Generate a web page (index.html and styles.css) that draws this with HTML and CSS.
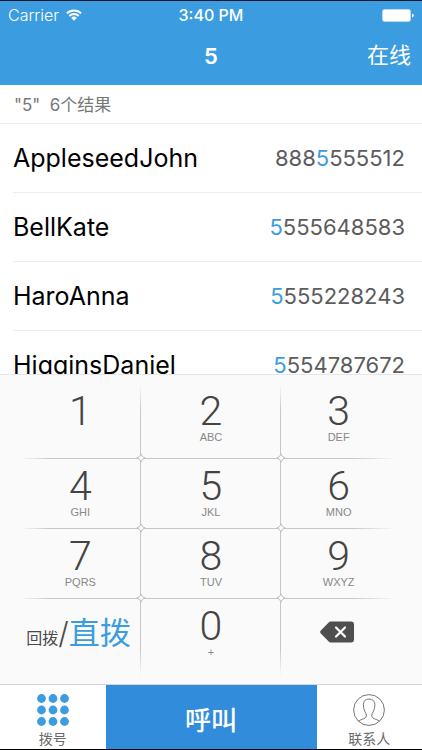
FILE: index.html
```html
<!DOCTYPE html>
<html lang="zh-CN">
<head>
    <meta charset="UTF-8">
    <meta name="viewport" content="width=device-width, initial-scale=1.0">
    <title>拨号</title>
    <link rel="stylesheet" href="styles.css">
</head>
<body>

    <!-- small star drawn where the keypad lines cross -->
    <svg class="defs" width="0" height="0">
        <symbol id="star" viewBox="0 0 10 10">
            <path d="M5 .8Q5.800 4.200 9.200 5Q5.800 5.800 5 9.200Q4.200 5.800 .8 5Q4.200 4.200 5 .8Z" fill="#fafafa" stroke="#bdbdbd" stroke-width="1"/>
        </symbol>
    </svg>

    <header class="top">
        <div class="status">
            <div class="carrier">
                <span>Carrier</span>
                <svg class="wifi" viewBox="0 0 16 12" width="16" height="12">
                    <path d="M.9 4.400a10 10 0 0 1 14.200 0M3.300 7a6.600 6.600 0 0 1 9.400 0" fill="none" stroke="#fff" stroke-width="1.9"/>
                    <path d="M8 11.800 5.200 8.900a4 4 0 0 1 5.600 0Z" fill="#fff"/>
                </svg>
            </div>
            <div class="clock">3:40 PM</div>
            <div class="battery">
                <svg viewBox="0 0 32 13" width="32" height="13">
                    <rect x=".5" y=".5" width="28" height="12" rx="2" fill="#fff" stroke="#b7dbf4"/>
                    <path d="M30 4.500q1.800.4 1.800 2t-1.800 2Z" fill="#fff"/>
                </svg>
            </div>
        </div>
        <div class="nav">
            <h1 class="title">5</h1>
            <button type="button" class="online">在线</button>
        </div>
    </header>

    <main class="results">
        <p class="summary">"5"&nbsp; 6个结果</p>
        <ul class="contacts">
            <li class="contact"><span class="who">AppleseedJohn</span><span class="number">888<b>5</b>555512</span></li>
            <li class="contact"><span class="who">BellKate</span><span class="number"><b>5</b>555648583</span></li>
            <li class="contact"><span class="who">HaroAnna</span><span class="number"><b>5</b>555228243</span></li>
            <li class="contact"><span class="who">HigginsDaniel</span><span class="number"><b>5</b>554787672</span></li>
        </ul>
    </main>

    <section class="keypad">
        <button type="button" class="key left">1<svg class="star"><use href="#star"/></svg></button>
        <button type="button" class="key">2<small>ABC</small><svg class="star"><use href="#star"/></svg></button>
        <button type="button" class="key right">3<small>DEF</small></button>
        <button type="button" class="key left">4<small>GHI</small><svg class="star"><use href="#star"/></svg></button>
        <button type="button" class="key">5<small>JKL</small><svg class="star"><use href="#star"/></svg></button>
        <button type="button" class="key right">6<small>MNO</small></button>
        <button type="button" class="key left">7<small>PQRS</small><svg class="star"><use href="#star"/></svg></button>
        <button type="button" class="key">8<small>TUV</small><svg class="star"><use href="#star"/></svg></button>
        <button type="button" class="key right">9<small>WXYZ</small></button>
        <button type="button" class="mode"><span class="back">回拨</span><span class="slash">/</span><span class="direct">直拨</span></button>
        <button type="button" class="key">0<small>+</small></button>
        <button type="button" class="delete" aria-label="删除">
            <svg viewBox="0 0 34 22" width="34" height="22">
                <path d="M10.500.5H31a3 3 0 0 1 3 3v15a3 3 0 0 1-3 3H10.500q-1 0-1.800-.9L.6 12.200q-.9-1.200 0-2.400L8.700 1.400Q9.500.5 10.500.5Z" fill="#4f4f4f"/>
                <path d="m16 6.500 9 9m0-9-9 9" stroke="#fff" stroke-width="2.2" stroke-linecap="round"/>
            </svg>
        </button>
    </section>

    <footer class="tabs">
        <button type="button" class="tab">
            <svg viewBox="0 0 32 32" width="32" height="32" fill="#3b9de0">
                <circle cx="4.5" cy="4.5" r="4.4"/><circle cx="16" cy="4.5" r="4.4"/><circle cx="27.5" cy="4.5" r="4.4"/>
                <circle cx="4.5" cy="16" r="4.4"/><circle cx="16" cy="16" r="4.4"/><circle cx="27.5" cy="16" r="4.4"/>
                <circle cx="4.5" cy="27.5" r="4.4"/><circle cx="16" cy="27.5" r="4.4"/><circle cx="27.5" cy="27.5" r="4.4"/>
            </svg>
            <span>拨号</span>
        </button>
        <button type="button" class="call">呼叫</button>
        <button type="button" class="tab">
            <svg viewBox="0 0 32 32" width="32" height="32" fill="none" stroke="#777" stroke-width="1">
                <circle cx="16" cy="16" r="15.4"/>
                <path d="M5.500 27.200c1.300-1.300 5.400-2.300 6.600-3.200 1.200-.9 1.700-2.600.9-4.200-1.300-2.400-2.600-5.400-2.600-9 0-3.700 1.900-5.800 5.600-5.800s5.900 2.100 5.900 5.800c0 3.600-1.500 6.600-2.800 9-.8 1.600-.3 3.300.9 4.200 1.200.9 5.200 1.900 6.500 3.200"/>
            </svg>
            <span>联系人</span>
        </button>
    </footer>

</body>
</html>
```
FILE: styles.css
```css
* {
    box-sizing: border-box;
}
body {
    font-family: Inter, "Noto Sans CJK SC", sans-serif;
    background-color: #fff;
    margin: 0;
    height: 100vh;
    display: flex;
    flex-direction: column;
    border-top: 1px solid #10142c;
    border-bottom: 1px solid #000;
}
button {
    font-family: inherit;
    background: none;
    border: none;
    padding: 0;
    margin: 0;
    cursor: pointer;
}
.defs {
    position: absolute;
}

/* header */
.top {
    background-color: #3b9de0;
    color: #fff;
    flex: none;
}
.status {
    display: grid;
    grid-template-columns: 1fr auto 1fr;
    align-items: center;
    height: 28px;
    padding: 0 8px;
    font-size: 16px;
}
.carrier {
    display: flex;
    align-items: center;
    gap: 7px;
    font-weight: 300;
}
.clock {
    font-weight: 500;
}
.battery {
    display: flex;
    justify-content: flex-end;
}
.nav {
    display: grid;
    grid-template-columns: 1fr auto 1fr;
    align-items: center;
    height: 56px;
    padding: 0 11px 2px;
}
.title {
    grid-column: 2;
    margin: 0;
    font-size: 22px;
    font-weight: 600;
}
.online {
    justify-self: end;
    color: #fff;
    font-size: 22px;
    line-height: 28px;
    padding-bottom: 2px;
}

/* search results */
.results {
    flex: 1;
    min-height: 0;
    overflow: hidden;
}
.summary {
    margin: 0;
    height: 39px;
    padding-left: 14px;
    border-bottom: 1px solid #ededed;
    color: #777;
    font-size: 17px;
    line-height: 40px;
}
.contacts {
    list-style: none;
    margin: 0;
    padding: 0 0 0 13px;
}
.contact {
    display: flex;
    justify-content: space-between;
    align-items: center;
    height: 69px;
    padding-right: 17px;
    border-bottom: 1px solid #ededed;
}
.who {
    color: #000;
    font-size: 25px;
}
.number {
    color: #5c5c5c;
    font-size: 22px;
}
.number b {
    color: #3b9de0;
    font-weight: inherit;
}

/* keypad */
.keypad {
    --line: #c6c6c6;
    --fade-x: linear-gradient(to right, transparent 20px, var(--line) 50px, var(--line) calc(100% - 70px), transparent calc(100% - 26px));
    --fade-y: linear-gradient(to bottom, transparent 10px, var(--line) 36px, var(--line) calc(100% - 36px), transparent calc(100% - 8px));
    flex: none;
    display: grid;
    grid-template-columns: repeat(3, 1fr);
    grid-template-rows: 75px 70px 70px 77px;
    padding: 9px 0 8px;
    border-top: 1px solid #e6e6e6;
    background-color: #fafafa;
    background-image: var(--fade-x), var(--fade-x), var(--fade-x), var(--fade-y), var(--fade-y);
    background-size: 100% 1px, 100% 1px, 100% 1px, 1px 100%, 1px 100%;
    background-position: 0 83px, 0 153px, 0 223px, 33.3% 0, 66.6% 0;
    background-repeat: no-repeat;
}
.key {
    position: relative;
    display: flex;
    flex-direction: column;
    align-items: center;
    padding-top: 7px;
    color: #444;
    font-family: Roboto, sans-serif;
    font-size: 41px;
    font-weight: 300;
    line-height: 40px;
}
.key small {
    color: #888;
    font-family: "Liberation Sans", sans-serif;
    font-size: 11px;
    font-weight: 400;
    line-height: 12px;
}
.left {
    padding-left: 20px;
}
.right {
    padding-right: 26px;
}
.star {
    position: absolute;
    right: -5px;
    bottom: -4px;
    width: 10px;
    height: 10px;
}
.mode {
    display: flex;
    align-items: baseline;
    justify-content: flex-end;
    padding: 10px 10px 0 0;
    color: #4a4a4a;
    line-height: 48px;
}
.back {
    font-size: 16px;
}
.slash {
    font-size: 30px;
    font-weight: 300;
}
.direct {
    color: #3b9de0;
    font-size: 31px;
}
.delete {
    display: flex;
    align-items: center;
    justify-content: center;
    padding: 0 30px 12px 0;
}

/* bottom bar */
.tabs {
    flex: none;
    display: grid;
    grid-template-columns: 1fr 2fr 1fr;
    height: 65px;
    border-top: 1px solid #d6d6d6;
}
.tab {
    display: flex;
    flex-direction: column;
    align-items: center;
    padding-top: 9px;
    color: #6a6a6a;
    font-size: 14px;
    line-height: 26px;
}
.tab svg {
    flex: none;
}
.call {
    background-color: #318cdb;
    color: #fff;
    font-size: 26px;
    font-weight: 500;
}
```
